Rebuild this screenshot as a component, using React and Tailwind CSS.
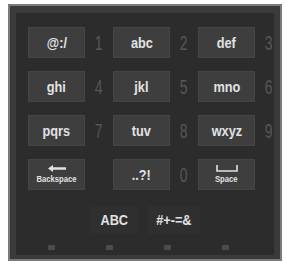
import React from "react";

const rows = [
  [["@:/", "1"], ["abc", "2"], ["def", "3"]],
  [["ghi", "4"], ["jkl", "5"], ["mno", "6"]],
  [["pqrs", "7"], ["tuv", "8"], ["wxyz", "9"]],
];

const font = { fontFamily: '"Liberation Sans Narrow", "Liberation Sans", Arial, sans-serif' };

function Key({ children }) {
  return (
    <div className="w-[57px] h-[31px] bg-[#3e3e3e] border border-[#454545] flex flex-col items-center justify-center text-[#e2e2e2] font-bold">
      {children}
    </div>
  );
}

function Num({ n }) {
  return (
    <div className="w-[28px] h-[31px] flex items-center justify-center text-[#575757] text-[20px] leading-none">
      <span className="inline-block scale-x-[0.7]">{n}</span>
    </div>
  );
}

export default function App() {
  return (
    <div className="w-[287px] h-[265px] bg-white pt-[4px] pl-[8px]" style={font}>
      <div className="w-[274px] h-[257px] border-2 border-[#7a7a7a] bg-[#3a3a3a] px-[6px] pt-[7px] pb-[4px]">
        <div className="w-full h-full bg-[#2c2c2c] pl-[12px] pt-[14px] flex flex-col">
          <div className="flex flex-col gap-[13px]">
            {rows.map((row, i) => (
              <div key={i} className="flex">
                {row.map(([label, n]) => (
                  <div key={label} className="flex">
                    <Key>
                      <span className="inline-block text-[15px] leading-none scale-x-[0.85]">{label}</span>
                    </Key>
                    <Num n={n} />
                  </div>
                ))}
              </div>
            ))}
            <div className="flex">
              <Key>
                <svg width="18" height="7" viewBox="0 0 18 7" className="mb-[3px]">
                  <path d="M0 3.5 L5 0 L5 2.3 L18 2.3 L18 4.7 L5 4.7 L5 7 Z" fill="#e2e2e2" />
                </svg>
                <span className="inline-block text-[9px] leading-none scale-x-[0.85]">Backspace</span>
              </Key>
              <div className="w-[28px]" />
              <Key>
                <span className="inline-block text-[15px] leading-none scale-x-[0.85]">..?!</span>
              </Key>
              <Num n="0" />
              <Key>
                <svg width="22" height="7" viewBox="0 0 22 7" className="mb-[3px]">
                  <path d="M1 0 L1 6 L21 6 L21 0" stroke="#e2e2e2" strokeWidth="1.6" fill="none" />
                </svg>
                <span className="inline-block text-[9px] leading-none scale-x-[0.85]">Space</span>
              </Key>
            </div>
          </div>
          <div className="flex mt-[16px] ml-[62px] gap-[10px]">
            <div className="w-[48px] h-[28px] bg-[#2f2f2f] flex items-center justify-center text-[#e2e2e2] font-bold text-[15px]">
              <span className="inline-block scale-x-[0.85]">ABC</span>
            </div>
            <div className="w-[52px] h-[28px] bg-[#2f2f2f] flex items-center justify-center text-[#e2e2e2] font-bold text-[15px]">
              <span className="inline-block scale-x-[0.85]">#+-=&amp;</span>
            </div>
          </div>
          <div className="flex mt-[11px] ml-[20px] gap-[51px]">
            {[0, 1, 2, 3].map((d) => (
              <div key={d} className="w-[7px] h-[5px] bg-[#4c4c4c] rounded-[1px]" />
            ))}
          </div>
        </div>
      </div>
    </div>
  );
}
